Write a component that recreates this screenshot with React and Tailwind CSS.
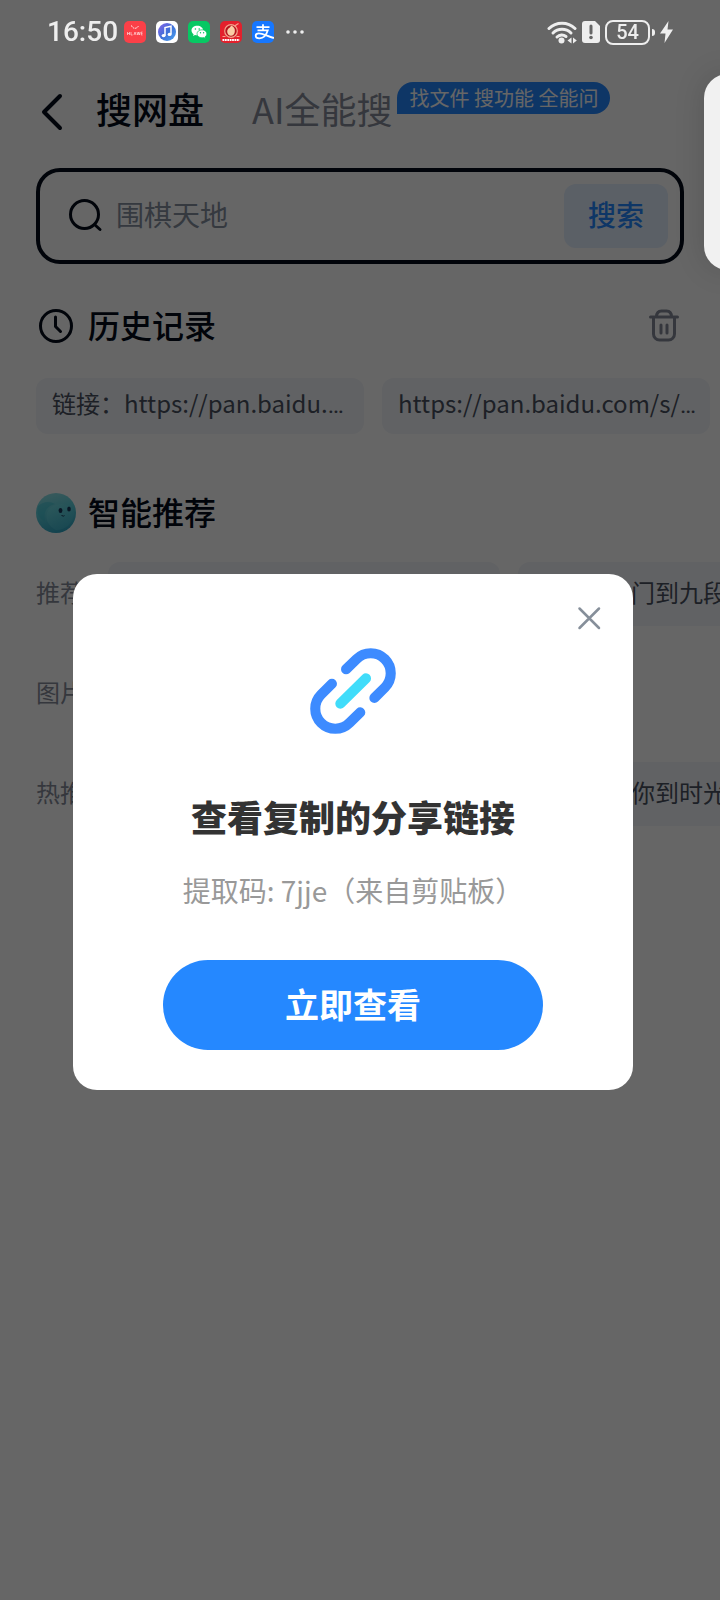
import React, { useState } from 'react';

const historyItems = ['链接：https://pan.baidu.', 'https://pan.baidu.com/s/'];

const AppIcons = () => (
  <div className="flex items-center gap-[10px]">
    <svg viewBox="0 0 22 22" className="size-[22px]">
      <rect width="22" height="22" rx="5" fill="#fb4048" />
      <path d="M7.5 4.5a3.6 3.6 0 0 0 7 0" fill="none" stroke="#fff" strokeWidth="1" strokeDasharray="1.6 .8" />
      <path d="M3.5 11v3M3.5 12.5h2M5.5 11v3M7 11v3h1.6M10 14l1-3 1 3M13 11l.8 3 .8-3 .8 3 .8-3M18.5 11h-1.2v3h1.2M17.3 12.5h1.2" fill="none" stroke="#ffd9da" strokeWidth=".7" />
    </svg>
    <svg viewBox="0 0 22 22" className="size-[22px]">
      <defs>
        <linearGradient id="music" x1="0" y1="0" x2="1" y2="1">
          <stop offset="0" stopColor="#8a63e8" />
          <stop offset=".5" stopColor="#3f6fd8" />
          <stop offset="1" stopColor="#4aa5f0" />
        </linearGradient>
      </defs>
      <rect width="22" height="22" rx="5" fill="#fff" />
      <circle cx="11" cy="11" r="9" fill="url(#music)" />
      <path d="M9 14.5V6.5l6-1.3v8" fill="none" stroke="#fff" strokeWidth="1.5" />
      <ellipse cx="7.6" cy="14.6" rx="2" ry="1.6" fill="#fff" />
      <ellipse cx="13.6" cy="13.4" rx="2" ry="1.6" fill="#fff" />
    </svg>
    <svg viewBox="0 0 22 22" className="size-[22px]">
      <rect width="22" height="22" rx="5" fill="#07c863" />
      <path d="M9.3 4.8c-3.3 0-5.8 2-5.8 4.7 0 1.5.8 2.8 2.1 3.7l-.6 1.7 2-1c.7.2 1.5.3 2.3.3 3.2 0 5.8-2.1 5.8-4.7S12.5 4.8 9.3 4.8z" fill="#fff" />
      <path d="M14 8.8c-2.8 0-5 1.7-5 4s2.2 4 5 4c.6 0 1.2-.1 1.7-.2l1.7.9-.5-1.5c1.2-.8 1.9-1.9 1.9-3.2 0-2.3-2.1-4-4.8-4z" fill="#fff" stroke="#07c863" strokeWidth=".7" />
      <g fill="#07c863">
        <circle cx="7.4" cy="8" r=".8" />
        <circle cx="11.2" cy="8" r=".8" />
        <circle cx="12.5" cy="11.8" r=".7" />
        <circle cx="15.6" cy="11.8" r=".7" />
      </g>
    </svg>
    <svg viewBox="0 0 22 22" className="size-[22px]">
      <rect width="22" height="22" rx="5" fill="#e3202c" />
      <circle cx="11" cy="10" r="6.3" fill="#b3141e" stroke="#f4a38c" strokeWidth="1.2" />
      <path d="M11 4.5c3 1 4.3 3.5 3.8 6.5-.4 2.4-1.9 3.7-3.8 3.7s-3.6-1.4-3.8-3.7c-.2-2.2 1-3.4 2-4 .8-.6 1.5-1.3 1.8-2.5z" fill="#f9cda6" />
      <path d="M14.5 5l4-2.5" stroke="#f4a38c" strokeWidth="1.2" />
      <path d="M2.5 15.5h3M16.5 15.5h3" stroke="#f4a38c" strokeWidth="1" />
      <path d="M2.5 19h17" stroke="#fff" strokeWidth="1.8" strokeDasharray="1.8 .6" />
    </svg>
    <svg viewBox="0 0 22 22" className="size-[22px]">
      <rect width="22" height="22" rx="5" fill="#1677ff" />
      <path d="M4.5 6.2h13M11 3.3v6M5.5 9.3h10.3c-1.2 4-4.2 8-8.3 8-2.2 0-3.8-1-3.8-2.6 0-1.5 1.4-2.4 3.2-2.4 4.3 0 8.6 3.2 15 4.7" fill="none" stroke="#fff" strokeWidth="1.8" />
    </svg>
    <svg viewBox="0 0 18 4" className="ml-[2px] h-1 w-[18px]" fill="#eee">
      <circle cx="2" cy="2" r="1.8" />
      <circle cx="9" cy="2" r="1.8" />
      <circle cx="16" cy="2" r="1.8" />
    </svg>
  </div>
);

const StatusBar = () => (
  <div className="relative z-20 flex h-16 items-center justify-between px-[47px] text-[#eee]">
    <div className="flex items-center gap-[6px]">
      <span className="font-['Roboto',sans-serif] text-[28px] leading-8 font-medium">16:50</span>
      <AppIcons />
    </div>
    <div className="flex items-center gap-[5px]">
      <svg viewBox="0 0 30 24" className="h-6 w-[30px]" fill="none" stroke="#eee" strokeWidth="3" strokeLinecap="round">
        <path d="M2 8.5a18.5 18.5 0 0 1 26 0" />
        <path d="M6 13a12.8 12.8 0 0 1 18 0" />
        <path d="M10 17a7 7 0 0 1 9-.5" />
        <circle cx="14.5" cy="20.5" r="3" fill="#eee" stroke="none" />
        <path d="M24.5 17.5v6l-4-3zM26 17.5v6l3.8-3z" fill="#eee" stroke="none" />
      </svg>
      <svg viewBox="0 0 18 22" className="h-[22px] w-[18px]">
        <path d="M3 0h10l5 5v14a3 3 0 0 1-3 3H3a3 3 0 0 1-3-3V3a3 3 0 0 1 3-3z" fill="#eee" />
        <path d="M9 5v7" stroke="#666" strokeWidth="3" strokeLinecap="round" />
        <circle cx="9" cy="16.5" r="1.8" fill="#666" />
      </svg>
      <div className="flex items-center gap-[2px]">
        <div className="flex h-[25px] w-[45px] items-center justify-center rounded-lg border-2 border-[#eee] font-['Roboto',sans-serif] text-[20px] leading-5 font-medium">
          54
        </div>
        <div className="h-[7px] w-[3px] rounded-r bg-[#eee]" />
      </div>
      <svg viewBox="0 0 13 22" className="h-[22px] w-[13px]" fill="#eee">
        <path d="M8.5 0L0 12.5h5.5L4.5 22 13 8.5H7.5z" />
      </svg>
    </div>
  </div>
);

const Header = () => (
  <header className="flex h-24 items-center px-9">
    <button aria-label="返回" className="mr-[30px]">
      <svg viewBox="0 0 30 40" className="h-10 w-[30px]" fill="none" stroke="#030b1a" strokeWidth="4" strokeLinecap="round" strokeLinejoin="round">
        <path d="M24 4L8 20l16 16" />
      </svg>
    </button>
    <button className="pb-2 text-[36px] leading-[48px] font-medium text-[#030b1a]">搜网盘</button>
    <button className="ml-12 pb-2 text-[36px] leading-[48px] text-[#858b99]">AI全能搜</button>
    <span className="mb-7 ml-[5px] h-8 rounded-t-2xl rounded-br-2xl bg-[#2588ff] px-3 text-[20px] leading-8 whitespace-nowrap text-white">
      找文件 搜功能 全能问
    </span>
  </header>
);

const SearchBar = () => (
  <form
    onSubmit={(e) => e.preventDefault()}
    className="mx-9 mt-2 flex h-24 items-center rounded-3xl border-4 border-[#030b1a] pr-3 pl-7"
  >
    <svg viewBox="0 0 36 36" className="size-9 shrink-0" fill="none" stroke="#030b1a" strokeWidth="3" strokeLinecap="round">
      <circle cx="16.5" cy="16.5" r="14" />
      <path d="M26.5 26.5l5.5 5" />
    </svg>
    <input
      type="text"
      aria-label="搜索网盘"
      placeholder="围棋天地"
      className="ml-3 min-w-0 flex-1 bg-transparent pb-1 text-[28px] leading-10 text-[#030b1a] outline-none placeholder:text-[#858f9f]"
    />
    <button type="submit" className="h-16 w-[104px] rounded-xl bg-[#e3efff] pb-1 text-[28px] font-medium text-[#2588ff]">
      搜索
    </button>
  </form>
);

const History = () => (
  <section className="mt-[38px]">
    <div className="flex h-12 items-center px-9">
      <svg viewBox="0 0 40 40" className="size-10" fill="none" stroke="#030b1a" strokeWidth="3" strokeLinecap="round" strokeLinejoin="round">
        <circle cx="20" cy="20" r="15.5" />
        <path d="M19.5 11v9.5l5 5" />
      </svg>
      <h2 className="ml-3 pb-1 text-[32px] leading-[44px] font-medium text-[#030b1a]">历史记录</h2>
      <button aria-label="清空历史记录" className="ml-auto">
        <svg viewBox="0 0 40 40" className="size-10" fill="none" stroke="#858b99" strokeWidth="3" strokeLinecap="round" strokeLinejoin="round">
          <path d="M6.5 11h27M12.5 11c0-4 2-6 5-6h5c3 0 5 2 5 6M9.500 11v17a6 6 0 0 0 6 6h9a6 6 0 0 0 6-6V11" />
          <path d="M17 19v8M23 19v8" />
        </svg>
      </button>
    </div>
    <div className="mt-7 flex gap-[18px] pl-9">
      {historyItems.map((item) => (
        <button
          key={item}
          className="h-14 w-[328px] shrink-0 rounded-xl bg-[#f2f5fa] px-4 pb-1 text-left text-[24px] whitespace-nowrap text-[#4a5060]"
        >
          {item}
          {/* the CJK face centres its ellipsis, Roboto keeps it on the baseline */}
          <span className="font-['Roboto',sans-serif]">…</span>
        </button>
      ))}
    </div>
  </section>
);

const Recommend = () => (
  <section className="mt-[55px]">
    <div className="flex h-12 items-center px-9">
      <svg viewBox="0 0 40 40" className="size-10">
        <defs>
          <linearGradient id="ball" x1=".3" y1="0" x2=".6" y2="1">
            <stop offset="0" stopColor="#8fe0e6" />
            <stop offset=".4" stopColor="#5fd0dc" />
            <stop offset="1" stopColor="#2fa4c2" />
          </linearGradient>
          <linearGradient id="wave" x1="0" y1="0" x2="1" y2="1">
            <stop offset="0" stopColor="#7de6ea" />
            <stop offset="1" stopColor="#45bdd2" />
          </linearGradient>
        </defs>
        <circle cx="20" cy="20" r="20" fill="url(#ball)" />
        <path d="M20 12c-7 2-11 8-9 15 1 4 5 8 9 10 10 0 17-7 18-16 0-8-10-12-18-9z" fill="url(#wave)" opacity=".4" />
        <path d="M2 13c6-5 12-5 17-2-8 2-12 8-10 17C3 26 0 20 2 13z" fill="#3cbfd2" opacity=".5" />
        <ellipse cx="24.5" cy="17.5" rx="1.9" ry="2.6" fill="#173b5c" />
        <ellipse cx="33" cy="16" rx="1.8" ry="2.6" fill="#173b5c" />
        <path d="M25.5 22.5l2 .6 1-.5" fill="none" stroke="#173b5c" strokeWidth="1" />
      </svg>
      <h2 className="ml-3 pb-1 text-[32px] leading-[44px] font-medium text-[#030b1a]">智能推荐</h2>
    </div>
    <div className="mt-[25px] flex flex-col gap-9 pl-9 text-[24px]">
      <div className="flex h-16 items-center">
        <span className="w-[72px] shrink-0 pb-1 text-[#858b99]">推荐</span>
        <div className="h-16 w-[392px] shrink-0 rounded-xl bg-[#f2f5fa]" />
        <button className="ml-[18px] h-16 w-[328px] shrink-0 rounded-xl bg-[#f2f5fa] pb-1 pl-[113px] text-left text-[#4a5060]">
          门到九段
        </button>
      </div>
      <div className="flex h-16 items-center">
        <span className="w-[72px] shrink-0 pb-1 text-[#858b99]">图片</span>
      </div>
      <div className="flex h-16 items-center">
        <span className="w-[72px] shrink-0 pb-1 text-[#858b99]">热推</span>
        <button className="ml-[410px] h-16 w-[328px] shrink-0 rounded-xl bg-[#f2f5fa] pb-1 pl-[113px] text-left text-[#4a5060]">
          你到时光
        </button>
      </div>
    </div>
  </section>
);

const LinkDialog = ({ onClose }) => (
  <div className="fixed inset-0 z-10 flex items-center justify-center bg-black/60 pt-16 pr-[14px]">
    <div role="dialog" aria-modal="true" className="relative flex w-[560px] max-w-[90%] flex-col items-center rounded-3xl bg-white pt-[74px] pb-10">
      <button aria-label="关闭" onClick={onClose} className="absolute top-7 right-7">
        <svg viewBox="0 0 32 32" className="size-8" fill="none" stroke="#868f9a" strokeWidth="2.5" strokeLinecap="round">
          <path d="M6.5 6.500L26 26M26 6.500L6.500 26" />
        </svg>
      </button>
      <svg viewBox="90 84 255 255" className="size-[86px]" fill="none" strokeWidth="30" strokeLinecap="round" strokeLinejoin="round">
        <path d="M197 147L228 117A59 59 0 0 1 312 201L281 232" stroke="#3d8bff" />
        <path d="M155 190L123 222A59 59 0 0 0 207 306L239 275" stroke="#3d8bff" />
        <path d="M180 249L256 174" stroke="#40dcfa" />
      </svg>
      <h1 className="mt-14 text-[36px] leading-[52px] font-black text-[#333]">查看复制的分享链接</h1>
      <p className="mt-7 text-[28px] leading-10 text-[#999]">提取码: 7jje（来自剪贴板）</p>
      <button className="mt-[50px] h-[90px] w-[380px] rounded-full bg-[#2588ff] pb-1 text-[34px] font-bold text-white">
        立即查看
      </button>
    </div>
  </div>
);

const App = () => {
  const [open, setOpen] = useState(true);

  return (
    <div className="relative min-h-screen overflow-hidden bg-white font-['Noto_Sans_CJK_SC',sans-serif]">
      <StatusBar />
      <Header />
      <SearchBar />
      <History />
      <Recommend />
      {open && <LinkDialog onClose={() => setOpen(false)} />}
      {/* edge panel handle */}
      <div className="absolute top-[74px] -right-4 z-20 h-[196px] w-8 rounded-l-3xl bg-[#f1f1f1] shadow-[0_0_30px_rgba(0,0,0,0.15)]" />
    </div>
  );
};

export default App;
